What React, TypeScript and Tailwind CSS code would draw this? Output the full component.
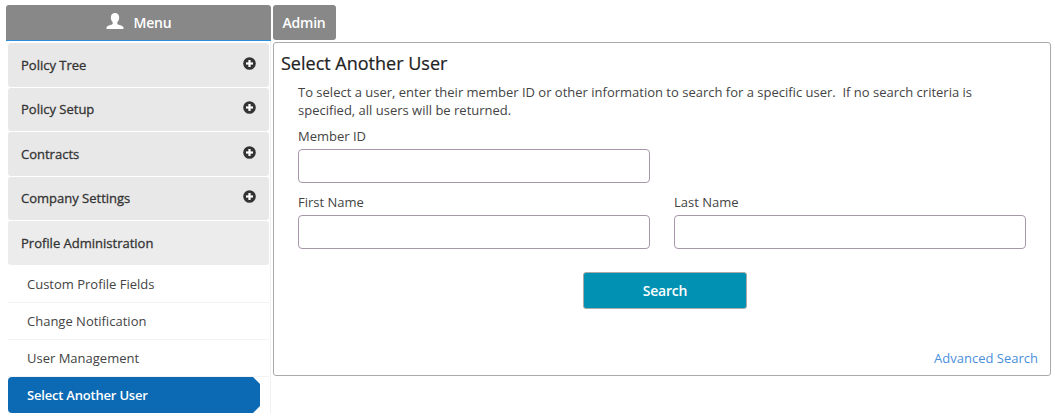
import React from 'react';

const NavHeader: React.FC<{ label: string; expandable?: boolean; tall?: boolean; className?: string }> = ({ label, expandable = true, tall = false, className = '' }) => (
    <div className={`relative flex items-center rounded-[3px] pl-[13px] text-[13px] text-[#333] ${tall ? 'h-[44px] pt-[2px]' : 'h-[43px]'} ${className}`}>
        <span className="[-webkit-text-stroke:0.3px_#333]">{label}</span>
        {expandable && (
            <svg className={`absolute right-[13px] ${tall ? 'top-[14px]' : 'top-[13px]'}`} width="13" height="13" viewBox="0 0 13 13">
                <circle cx="6.5" cy="6.5" r="6.3" fill="#333" />
                <rect x="3" y="5.4" width="7" height="2.2" fill="#fff" />
                <rect x="5.4" y="3" width="2.2" height="7" fill="#fff" />
            </svg>
        )}
    </div>
);

const SubItem: React.FC<{ label: string }> = ({ label }) => (
    <div className="flex h-[37px] items-center border-b border-[#f2f2f2] pl-[19px] pt-[2px] text-[13px] text-[#444]">{label}</div>
);

const Field: React.FC<{ label: string }> = ({ label }) => (
    <div className="flex w-[352px] flex-col">
        <label className="text-[13px] leading-[18px] text-[#444]">{label}</label>
        <input className="mt-[4px] h-[34px] rounded-[4px] border border-[#a897ab] bg-white" />
    </div>
);

export default function App() {
    return (
        <div className="h-[417px] w-[1055px] overflow-hidden bg-white pl-[6px] pt-[5px] font-['Open_Sans',sans-serif]">
            <div className="flex gap-[2px]">
                <div className="flex h-[36px] w-[265px] items-center justify-center gap-[10px] rounded-t-[3px] border-b border-[#2a8fd8] bg-[#888] text-[14px] font-semibold tracking-[-0.2px] text-white">
                    <svg width="18" height="17" viewBox="0 0 18 17" fill="#fff" className="mb-[3px]">
                        <path d="M9 0c2.6 0 4.2 2 4.2 4.6 0 1.900-.8 3.600-1.900 4.600v1.200c0 .7 1 1.100 2.400 1.600 1.900.7 3.600 1.300 3.800 2.500V16H.5v-1.500c.2-1.200 1.900-1.800 3.800-2.500 1.400-.5 2.400-.9 2.400-1.600V9.200C5.600 8.200 4.800 6.500 4.800 4.600 4.800 2 6.400 0 9 0z" />
                    </svg>
                    <span>Menu</span>
                </div>
                <div className="flex h-[35px] w-[63px] items-center justify-center rounded-[3px] bg-[#888] pr-[1px] text-[14px] font-semibold tracking-[-0.2px] text-white">Admin</div>
            </div>
            <div className="flex">
                <div className="w-[265px] border-r border-[#f0f0f0] pl-[2px] pr-[1px] pt-[2px]">
                    <div className="flex w-[261px] flex-col gap-[1px]">
                        <NavHeader label="Policy Tree" tall className="bg-[#e8e8e8]" />
                        <NavHeader label="Policy Setup" className="bg-[#e8e8e8]" />
                        <NavHeader label="Contracts" tall className="bg-[#e8e8e8]" />
                        <NavHeader label="Company Settings" className="bg-[#e8e8e8]" />
                        <NavHeader label="Profile Administration" expandable={false} tall className="bg-[#ececec]" />
                    </div>
                    <div className="mt-[1px] w-[261px]">
                        <SubItem label="Custom Profile Fields" />
                        <SubItem label="Change Notification" />
                        <SubItem label="User Management" />
                        <div className="flex h-[36px] w-[252px] items-center rounded-l-[4px] bg-[#0b6ab3] pl-[19px] pt-[2px] text-[13px] font-semibold tracking-[-0.2px] text-white [clip-path:polygon(0_0,calc(100%-7px)_0,100%_7px,100%_calc(100%-7px),calc(100%-7px)_100%,0_100%)]">
                            Select Another User
                        </div>
                    </div>
                </div>
                <div className="ml-[2px] mt-[1px] flex h-[334px] w-[778px] flex-col rounded-[3px] border border-[#aaa] pl-[7px]">
                    <h1 className="mt-[7px] text-[18px] font-normal leading-[27px] text-[#222] [-webkit-text-stroke:0.2px_#222]">Select Another User</h1>
                    <div className="pl-[17px]">
                        <p className="mt-[6px] w-[700px] text-[13px] leading-[18px] text-[#444]">
                            To select a user, enter their member ID or other information to search for a specific user.&nbsp; If no search criteria is specified, all users will be returned.
                        </p>
                        <div className="mt-[8px]">
                            <Field label="Member ID" />
                        </div>
                        <div className="mt-[10px] flex gap-[24px]">
                            <Field label="First Name" />
                            <Field label="Last Name" />
                        </div>
                        <div className="mt-[23px] flex w-[734px] justify-center">
                            <button className="h-[37px] w-[164px] rounded-[3px] border border-[#aaa] bg-[#0091b3] text-[14px] font-semibold tracking-[-0.2px] text-white">Search</button>
                        </div>
                    </div>
                    <div className="mt-auto mb-[8px] pr-[12px] text-right text-[13px] leading-[18px] text-[#4a8fdc]">Advanced Search</div>
                </div>
            </div>
        </div>
    );
}
